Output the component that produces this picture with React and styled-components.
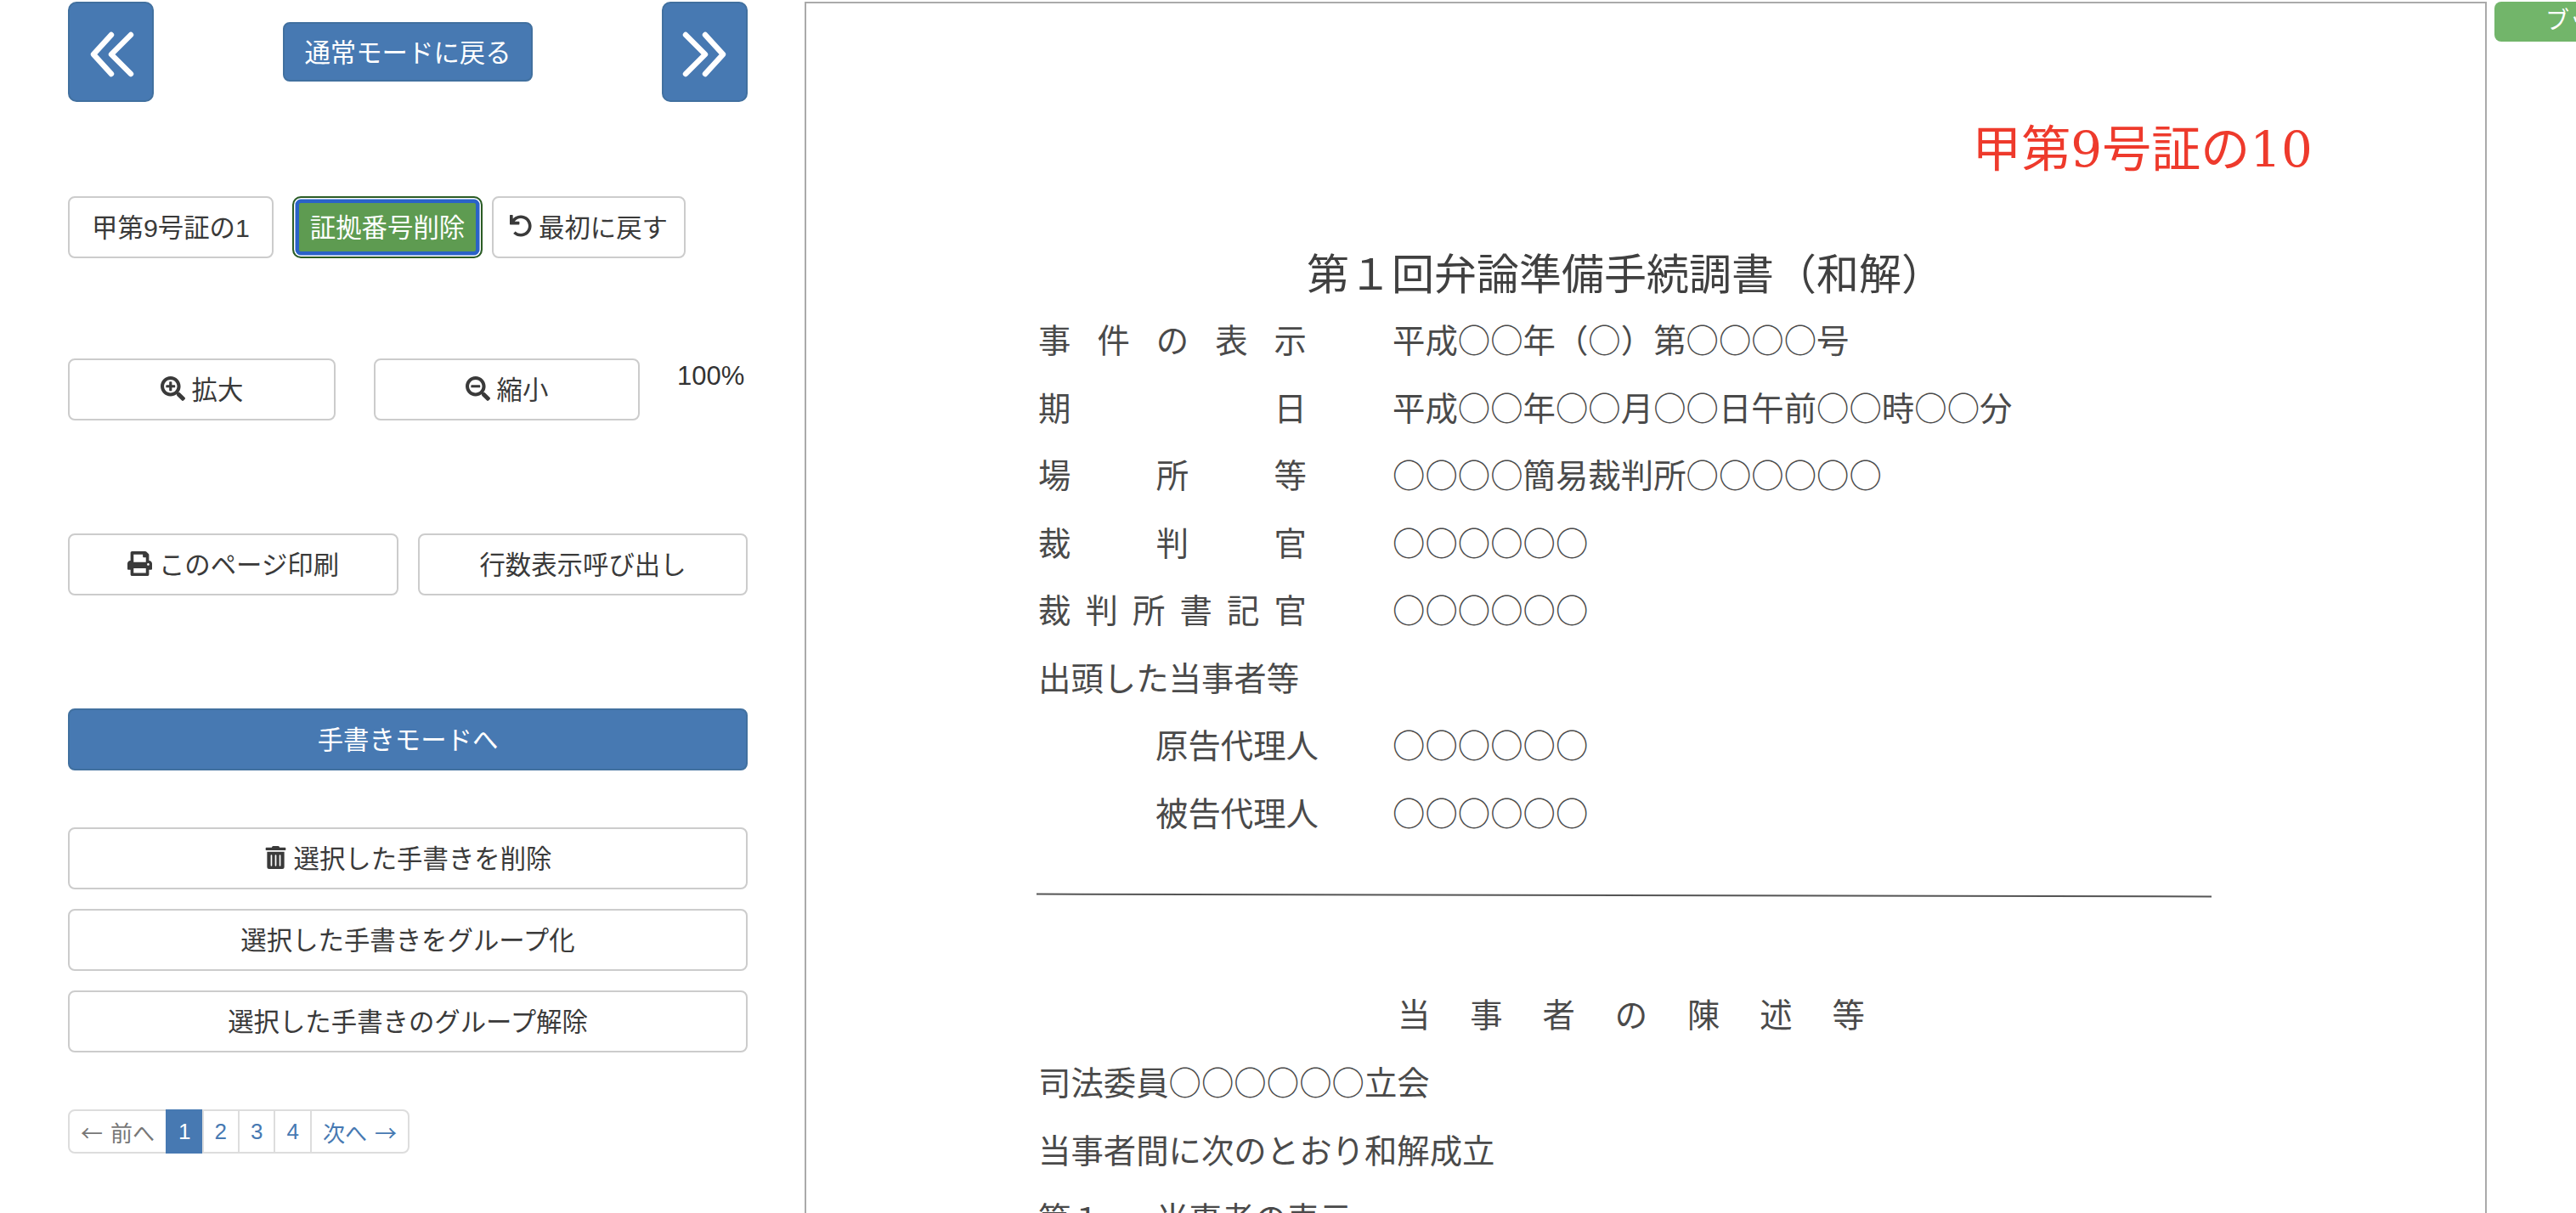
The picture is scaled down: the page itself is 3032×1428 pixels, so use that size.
import styled, { createGlobalStyle } from 'styled-components';
import { FaSearchPlus, FaSearchMinus, FaUndo, FaPrint, FaTrashAlt } from 'react-icons/fa';

const GlobalStyle = createGlobalStyle`
  html, body {
    margin: 0;
    padding: 0;
    height: 1428px;
    overflow: hidden;
    background: #fff;
  }
  * { box-sizing: border-box; }
`;

const Page = styled.div`
  display: flex;
  align-items: flex-start;
  width: 3032px;
  height: 1428px;
  padding: 2px 0 0 80px;
  overflow: hidden;
  font-family: "Liberation Sans", "Noto Sans CJK JP", sans-serif;
  font-size: 30.4px;
  color: #333;
`;

const Sidebar = styled.div`
  width: 800px;
  flex-shrink: 0;
`;

const Row = styled.div`
  display: flex;
  align-items: ${props => props.$align || 'stretch'};
  justify-content: ${props => props.$justify || 'flex-start'};
  margin-top: ${props => props.$mt || 0}px;
`;

const Btn = styled.button`
  display: flex;
  align-items: center;
  justify-content: center;
  gap: 8px;
  width: ${props => (props.$w ? `${props.$w}px` : '100%')};
  height: ${props => props.$h || 73}px;
  margin-left: ${props => props.$ml || 0}px;
  padding: 0 0 3px;
  flex-shrink: 0;
  font: inherit;
  color: #3a3a3a;
  white-space: nowrap;
  background: #fff;
  border: 2px solid #ccc;
  border-radius: 8px;
`;

const BlueBtn = styled(Btn)`
  color: #fff;
  background: #4779b2;
  border-color: #41709f;
`;

const ArrowBtn = styled(BlueBtn)`
  padding: 6px 0 0;
  border-radius: 10px;
`;

const ActiveBtn = styled(Btn)`
  color: #fff;
  background: #5e9b51;
  border-color: #2b5c24;
  border-radius: 10px;
  box-shadow: inset 0 0 0 1.5px #fff, inset 0 0 0 6px #2a62c8;
`;

const Percent = styled.div`
  margin-left: 44px;
  line-height: 42px;
  font-size: 31px;
`;

const Pager = styled.div`
  display: inline-flex;
  height: 52px;
  margin-top: 67px;
  font-size: 26px;
`;

const PageLink = styled.span`
  display: flex;
  align-items: center;
  gap: 9px;
  padding: 0 13px;
  margin-left: -2px;
  color: ${props => (props.$active ? '#fff' : props.$off ? '#777' : '#4779b2')};
  background: ${props => (props.$active ? '#4779b2' : '#fff')};
  border: 2px solid ${props => (props.$active ? '#4779b2' : '#ddd')};
  &:first-child {
    margin-left: 0;
    border-radius: 8px 0 0 8px;
  }
  &:last-child {
    border-radius: 0 8px 8px 0;
  }
`;

const Arrow = styled.span`
  font-family: "Noto Sans CJK JP", sans-serif;
`;

const Sheet = styled.div`
  width: 1980px;
  height: 1500px;
  margin-left: 67px;
  flex-shrink: 0;
  border: 2px solid #aaa;
  font-family: "Noto Sans CJK JP", sans-serif;
  font-size: 38.4px;
  color: #4a4a4a;
`;

const ExhibitNo = styled.div`
  margin-top: 142px;
  padding-right: 203px;
  text-align: right;
  font-family: "DejaVu Serif", "Noto Sans CJK JP", serif;
  font-size: 58px;
  line-height: 60px;
  color: #ee3a2c;
`;

const Title = styled.div`
  margin-top: 73px;
  padding-left: 589px;
  font-size: 50px;
  line-height: 80px;
  white-space: nowrap;
  color: #404040;
`;

const Lines = styled.div`
  padding-left: 273px;
`;

const Line = styled.div`
  display: flex;
  height: 79.5px;
  line-height: 79.5px;
  white-space: nowrap;
`;

const Label = styled.div`
  flex-shrink: 0;
  width: ${props => (props.$indent ? 279 : 417)}px;
  margin-left: ${props => (props.$indent ? 138 : 0)}px;
`;

const Fit = styled.span`
  display: block;
  width: 316px;
  text-align: justify;
  text-align-last: justify;
  text-justify: inter-character;
`;

const Rule = styled.div`
  width: 1383px;
  height: 2px;
  margin: 58px 0 0 271px;
  background: #555;
  transform: rotate(0.12deg);
`;

const Heading = styled.div`
  width: 550px;
  margin: 97px 0 0 696px;
  line-height: 80px;
  text-align: justify;
  text-align-last: justify;
  text-justify: inter-character;
`;

const Plain = styled.div`
  line-height: 80px;
  white-space: nowrap;
`;

const ItemNo = styled.span`
  display: inline-block;
  width: 139px;
`;

const SideTab = styled.div`
  flex-shrink: 0;
  height: 47px;
  margin-left: 9px;
  padding-left: 60px;
  width: 200px;
  font-size: 28px;
  line-height: 45px;
  white-space: nowrap;
  color: #fff;
  background: #72b56a;
  border-radius: 8px;
`;

const Chevrons = ({ flip }) => (
  <svg width="54" height="56" viewBox="0 0 54 56" fill="none" stroke="#fff" strokeWidth="6.4" strokeLinecap="round" strokeLinejoin="round" style={flip ? { transform: 'scaleX(-1)' } : undefined}>
    <polyline points="27,5 6,28 27,51" />
    <polyline points="50,5 27,28 50,51" />
  </svg>
);

const rows = [
  ['事件の表示', '平成○○年（○）第○○○○号'],
  ['期日', '平成○○年○○月○○日午前○○時○○分'],
  ['場所等', '○○○○簡易裁判所○○○○○○'],
  ['裁判官', '○○○○○○'],
  ['裁判所書記官', '○○○○○○'],
];

const App = () => (
  <Page>
    <GlobalStyle />
    <Sidebar>
      <Row $align="center" $justify="space-between">
        <ArrowBtn $w={101} $h={118}><Chevrons /></ArrowBtn>
        <BlueBtn $w={294} $h={70}>通常モードに戻る</BlueBtn>
        <ArrowBtn $w={101} $h={118}><Chevrons flip /></ArrowBtn>
      </Row>

      <Row $mt={111}>
        <Btn $w={242}>甲第9号証の1</Btn>
        <ActiveBtn $w={224} $ml={22}>証拠番号削除</ActiveBtn>
        <Btn $w={228} $ml={11}><FaUndo size={26} />最初に戻す</Btn>
      </Row>

      <Row $mt={118}>
        <Btn $w={315}><FaSearchPlus size={29} />拡大</Btn>
        <Btn $w={313} $ml={45}><FaSearchMinus size={29} />縮小</Btn>
        <Percent>100%</Percent>
      </Row>

      <Row $mt={133}>
        <Btn $w={389}><FaPrint size={29} />このページ印刷</Btn>
        <Btn $w={388} $ml={23}>行数表示呼び出し</Btn>
      </Row>

      <Row $mt={133}><BlueBtn>手書きモードへ</BlueBtn></Row>
      <Row $mt={67}><Btn><FaTrashAlt size={27} />選択した手書きを削除</Btn></Row>
      <Row $mt={23}><Btn>選択した手書きをグループ化</Btn></Row>
      <Row $mt={23}><Btn>選択した手書きのグループ解除</Btn></Row>

      <Pager>
        <PageLink $off><Arrow>←</Arrow>前へ</PageLink>
        <PageLink $active>1</PageLink>
        <PageLink>2</PageLink>
        <PageLink>3</PageLink>
        <PageLink>4</PageLink>
        <PageLink>次へ<Arrow>→</Arrow></PageLink>
      </Pager>
    </Sidebar>

    <Sheet>
      <ExhibitNo>甲第9号証の10</ExhibitNo>
      <Title>第１回弁論準備手続調書（和解）</Title>
      <Lines>
        {rows.map(([label, value]) => (
          <Line key={label}>
            <Label><Fit>{label}</Fit></Label>
            <span>{value}</span>
          </Line>
        ))}
        <Line>出頭した当事者等</Line>
        <Line>
          <Label $indent>原告代理人</Label>
          <span>○○○○○○</span>
        </Line>
        <Line>
          <Label $indent>被告代理人</Label>
          <span>○○○○○○</span>
        </Line>
      </Lines>
      <Rule />
      <Heading>当事者の陳述等</Heading>
      <Lines>
        <Plain>司法委員○○○○○○立会</Plain>
        <Plain>当事者間に次のとおり和解成立</Plain>
        <Plain><ItemNo>第１</ItemNo>当事者の表示</Plain>
      </Lines>
    </Sheet>

    <SideTab>ブックマーク</SideTab>
  </Page>
);

export default App;
